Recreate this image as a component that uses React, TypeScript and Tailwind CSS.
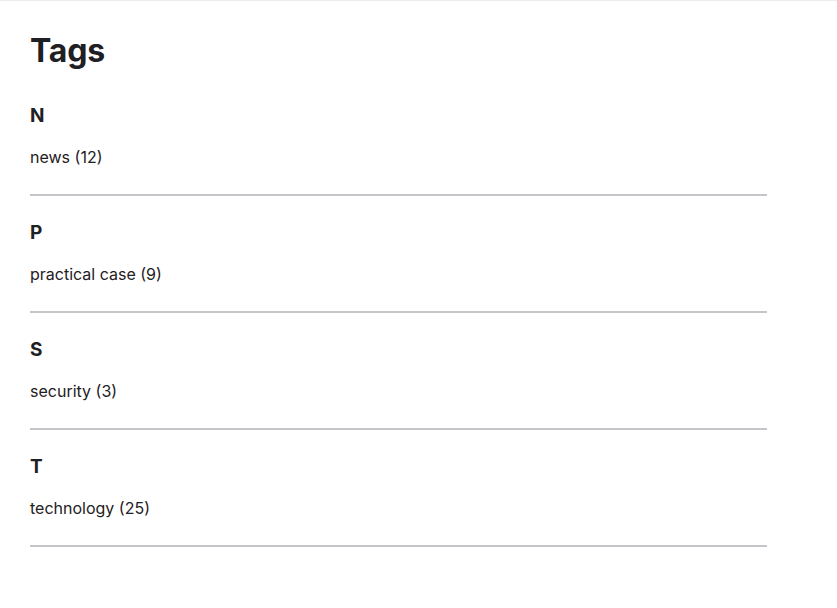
import React from 'react';

const groups = [
  { letter: 'N', tags: [{ name: 'news', count: 12 }] },
  { letter: 'P', tags: [{ name: 'practical case', count: 9 }] },
  { letter: 'S', tags: [{ name: 'security', count: 3 }] },
  { letter: 'T', tags: [{ name: 'technology', count: 25 }] },
];

export default function App() {
  return (
    <div
      className="min-h-screen bg-white border-t border-[#ececee] text-[#1f2023]"
      style={{ fontFamily: 'Inter, "Noto Sans", sans-serif' }}
    >
      <main className="w-[737px] ml-[30px] pt-[30px]">
        <h1 className="text-[32px] leading-[40px] font-bold tracking-[-0.2px]">Tags</h1>
        <div className="mt-[31px]">
          {groups.map((g) => (
            <section key={g.letter} className="mb-[23px]">
              <h2 className="text-[19px] leading-[28px] font-bold">{g.letter}</h2>
              <ul className="mt-[15px]">
                {g.tags.map((t) => (
                  <li key={t.name} className="text-[16px] leading-[24px]">
                    <a href="#" className="text-[#1f2023]">
                      {t.name} ({t.count})
                    </a>
                  </li>
                ))}
              </ul>
              <hr className="mt-[25px] border-0 h-[2px] bg-[#c4c5c8]" />
            </section>
          ))}
        </div>
      </main>
    </div>
  );
}
